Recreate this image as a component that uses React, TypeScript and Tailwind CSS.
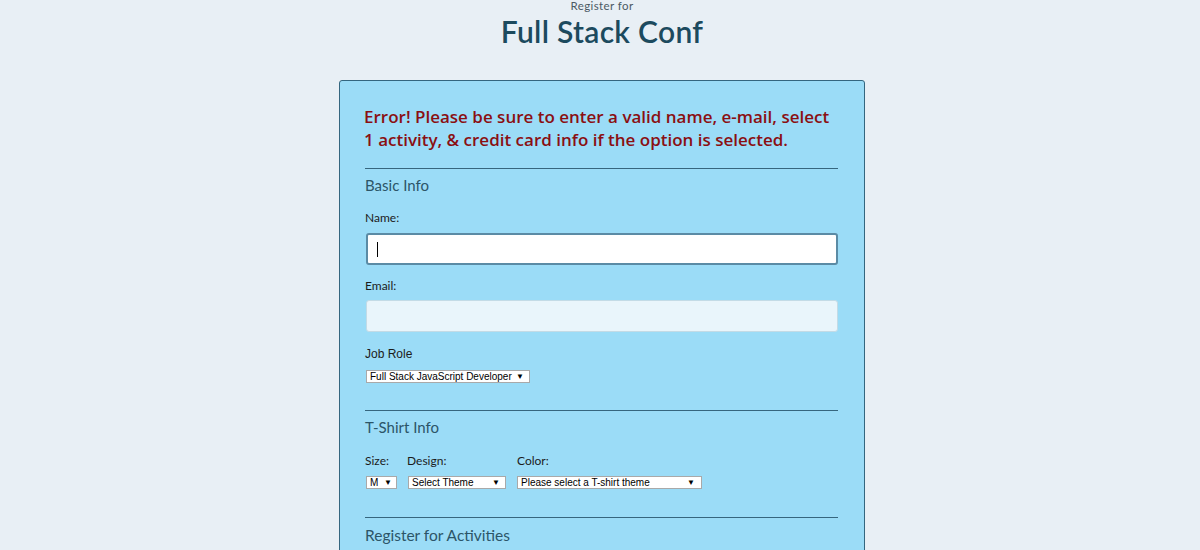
import React from "react";

function FakeSelect({ text, width, arrowPad = 6 }: { text: string; width: number; arrowPad?: number }) {
  return (
    <div
      className="flex h-[13px] items-center justify-between border border-[#a9a9a9] bg-white pl-[3px] text-[10px] leading-none text-black"
      style={{ width, paddingRight: arrowPad, fontFamily: '"Liberation Sans", Arial, sans-serif' }}
    >
      <span className="whitespace-nowrap">{text}</span>
      <span className="text-[8px] leading-none">▼</span>
    </div>
  );
}

export default function App() {
  const font = { fontFamily: 'Lato, "Noto Sans", sans-serif' };
  return (
    <div className="min-h-[550px] w-[1200px] overflow-hidden bg-[#e8eff5] pl-[4px]" style={font}>
      <header className="flex flex-col items-center">
        <div className="h-[12px] text-[11.5px] leading-[12px] tracking-[0.4px] text-[#4b5a64]">Register for</div>
        <h1 className="h-[38px] text-[30px] font-semibold leading-[38px] tracking-[0.3px] text-[#1c4a5e]">
          Full Stack Conf
        </h1>
      </header>

      <div className="mx-auto mt-[30px] w-[526px] rounded-[3px] border border-[#34667f] bg-[#9bdcf7] pb-10 pl-[25px] pr-[26px] pt-[24px]">
        <p
          className="whitespace-nowrap text-[17px] font-semibold leading-[23px] text-[#8a0f12]"
          style={{ marginLeft: -1, fontFamily: '"Open Sans", Lato, sans-serif' }}
        >
          Error! Please be sure to enter a valid name, e-mail, select
          <br />1 activity, &amp; credit card info if the option is selected.
        </p>

        <div className="mt-[17px] h-px bg-[#36667e]" />
        <h2 className="mt-[6px] text-[15px] leading-[20px] text-[#2c5568]">Basic Info</h2>

        <label className="mt-[15px] block text-[12px] leading-[16px] text-[#1b1b1b]">Name:</label>
        <div className="ml-px mt-[7px] flex h-[32px] items-center rounded-[3px] border-2 border-[#5b8ba5] bg-white pl-[9px]">
          <div className="h-[15px] w-px bg-black" />
        </div>

        <label className="mt-[13px] block text-[12px] leading-[16px] text-[#1b1b1b]">Email:</label>
        <div className="ml-px mt-[6px] h-[32px] rounded-[3px] border border-[#c3dbe6] bg-[#e9f5fb]" />

        <label
          className="mt-[15px] block text-[12px] leading-[14px] text-[#1b1b1b]"
          style={{ fontFamily: '"Liberation Sans", Arial, sans-serif' }}
        >
          Job Role
        </label>
        <div className="mt-[9px] pl-px">
          <FakeSelect text="Full Stack JavaScript Developer" width={164} arrowPad={5} />
        </div>

        <div className="mt-[27px] h-px bg-[#36667e]" />
        <h2 className="mt-[6px] text-[15px] leading-[20px] text-[#2c5568]">T-Shirt Info</h2>

        <div className="mt-[16px] flex gap-[10px]">
          <div className="flex flex-col gap-[7px]">
            <span className="text-[12px] leading-[16px] text-[#1b1b1b]">Size:</span>
            <div className="pl-px">
              <FakeSelect text="M" width={31} arrowPad={4} />
            </div>
          </div>
          <div className="flex flex-col gap-[7px]">
            <span className="text-[12px] leading-[16px] text-[#1b1b1b]">Design:</span>
            <div className="pl-px">
              <FakeSelect text="Select Theme" width={98} arrowPad={5} />
            </div>
          </div>
          <div className="flex flex-col gap-[7px] pl-px">
            <span className="text-[12px] leading-[16px] text-[#1b1b1b]">Color:</span>
            <FakeSelect text="Please select a T-shirt theme" width={185} arrowPad={6} />
          </div>
        </div>

        <div className="mt-[28px] h-px bg-[#36667e]" />
        <h2 className="mt-[7px] text-[15.5px] leading-[20px] text-[#2c5568]">Register for Activities</h2>
      </div>
    </div>
  );
}
